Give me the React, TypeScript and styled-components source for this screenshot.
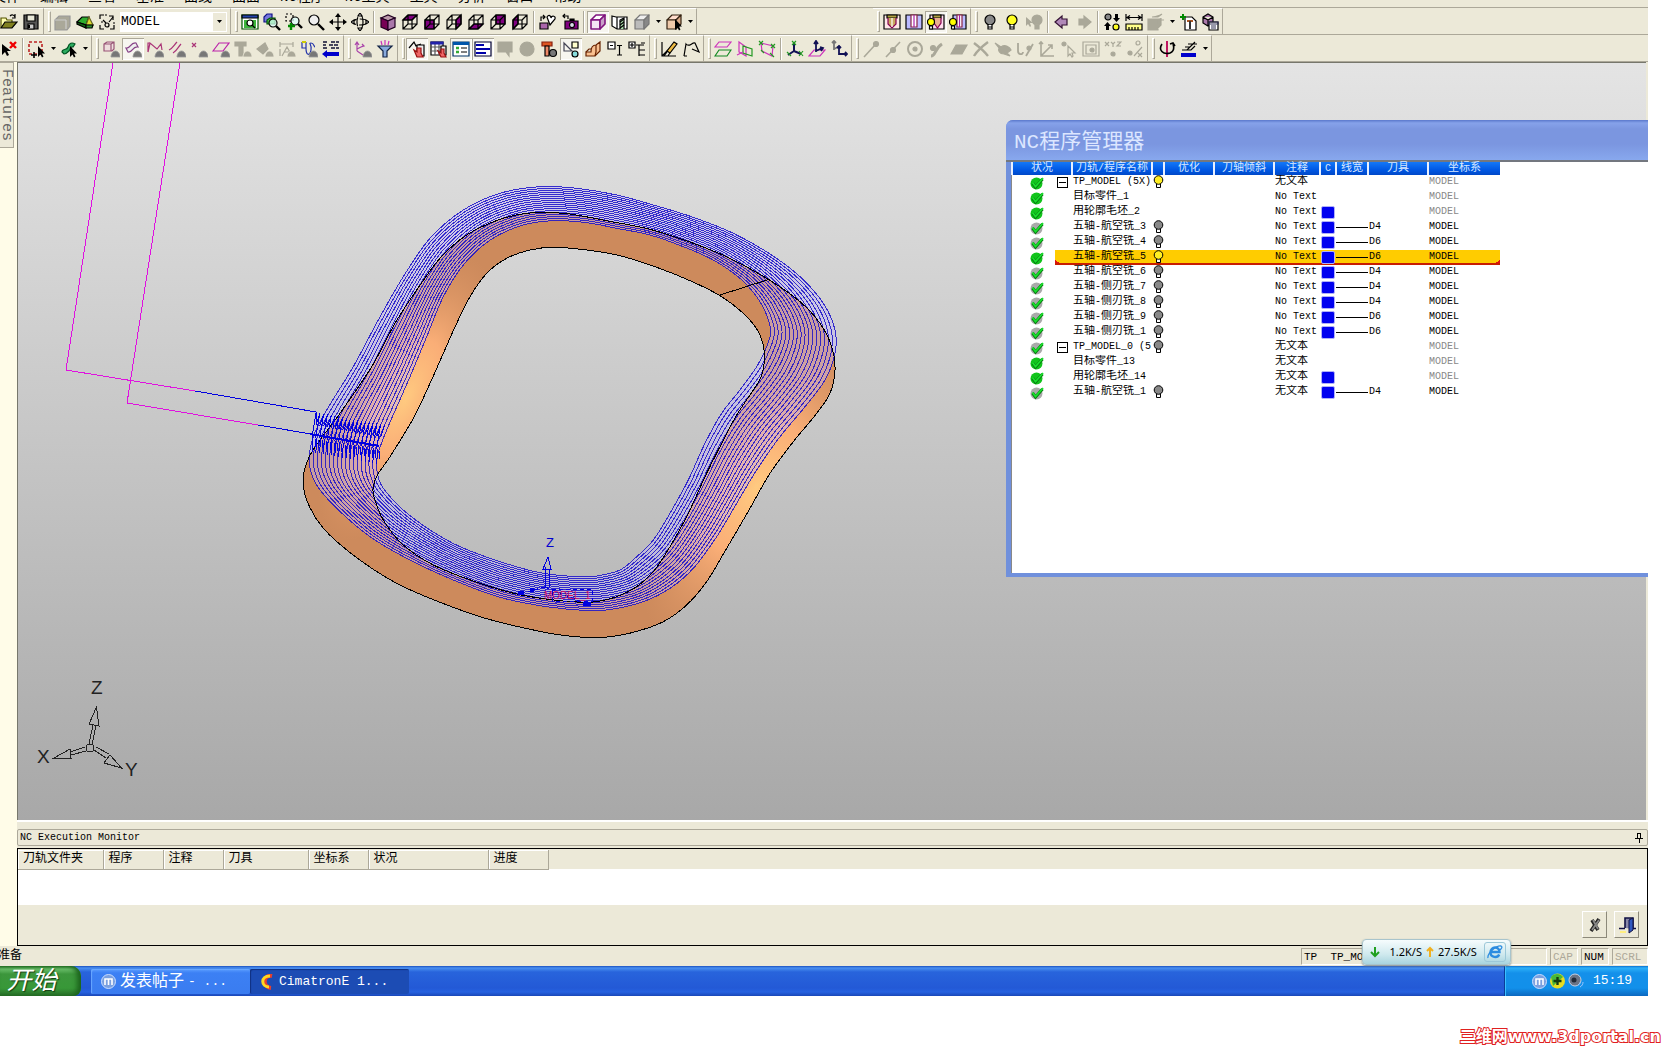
import React from "react";
import styled, { createGlobalStyle, css } from "styled-components";

const mono = '"Liberation Mono", "Noto Sans CJK SC", monospace';
const face = "#ece9d8";
const shade = "#aca899";

const GlobalStyle = createGlobalStyle`
  *, *::before, *::after { box-sizing: border-box; }
  body { margin: 0; background: #fff; color: #000; font: 12px/16px ${mono}; }
  button, select { font: inherit; color: inherit; margin: 0; padding: 0; border: 0; background: none; }
`;

/* ---------- shared ---------- */

const Page = styled.div`
  position: relative;
  height: 100vh;
  padding: 0 32px 54px 0;
  overflow: hidden;
`;
const Shell = styled.div`
  height: 100%;
  display: flex;
  flex-direction: column;
  background: ${face};
`;
const Cjk = styled.span`
  font-size: 11px;
`;
const Mixed = ({ text }: { text: string }) => (
  <>
    {text.split(/([\u4e00-\u9fff]+)/).map((run, i) => (i % 2 ? <Cjk key={i}>{run}</Cjk> : run))}
  </>
);

/* ---------- menu and toolbars ---------- */

const MenuBar = styled.nav`
  display: flex;
  align-items: flex-end;
  gap: 20px;
  height: 7px;
  flex: none;
  overflow: hidden;
  padding-bottom: 2px;
  margin-left: -8px;
  font-size: 14px;
  line-height: 16px;
`;
const MenuItem = styled.button`
  white-space: nowrap;
`;
const ToolRow = styled.div`
  display: flex;
  flex: none;
  height: 27px;
  border-top: 1px solid ${shade};
  overflow: hidden;
`;
const Group = styled.div<{ $first?: boolean; $gap?: number }>`
  display: flex;
  align-items: center;
  flex: none;
  height: 26px;
  padding-right: 1px;
  margin-left: ${(p) => (p.$first ? -2 : p.$gap || 0)}px;
  border-right: 1px solid ${shade};
  border-top: 1px solid #fff;
`;
const Grip = styled.span`
  width: 3px;
  height: 21px;
  margin: 0 1px 0 4px;
  border: 1px solid;
  border-color: #fff ${shade} ${shade} #fff;
`;
const Divider = styled.span`
  width: 2px;
  height: 22px;
  margin: 0 2px;
  background: ${shade};
  border-right: 1px solid #fff;
`;
const ToolButton = styled.button<{ $on?: boolean }>`
  width: 22px;
  height: 22px;
  display: grid;
  place-items: center;
  ${(p) =>
    p.$on &&
    css`
      background: #f7f6f0;
      box-shadow: inset 1px 1px ${shade}, inset -1px -1px #fff;
    `}
`;
const CaretButton = styled.button`
  width: 10px;
  height: 22px;
  display: grid;
  place-items: center;
`;
const Glyph = styled.svg`
  display: block;
  width: 18px;
  height: 18px;
  fill: none;
  stroke: #000;
  stroke-width: 1.2;
`;
const ModelPicker = styled.label`
  position: relative;
  display: flex;
  align-items: center;
  width: 107px;
  height: 20px;
  margin: 0 2px;
  background: #fff;
  font-size: 13px;
`;
const ModelSelect = styled.select`
  appearance: none;
  width: 100%;
  height: 20px;
  padding-left: 1px;
  outline: 0;
`;
const PickerArrow = styled.span`
  position: absolute;
  right: 1px;
  top: 1px;
  width: 13px;
  height: 18px;
  display: grid;
  place-items: center;
  background: ${face};
  pointer-events: none;
`;
const Caret = () => (
  <svg width="5" height="3" viewBox="0 0 5 3">
    <path d="M0 0h5L2.500 3z" />
  </svg>
);

const purple = "#800080";
const faces: Record<string, string> = {
  top: "2,7 7,2 16,2 11,7",
  front: "2,7 11,7 11,16 2,16",
  right: "11,7 16,2 16,11 11,16",
  bottom: "2,16 7,11 16,11 11,16",
  back: "7,2 16,2 16,11 7,11",
  left: "2,7 7,2 7,11 2,16",
};
const wire = (side: string) => (
  <>
    <polygon points={faces[side]} fill={purple} />
    <path d="M2 7h9v9H2zM7 2h9v9H7zM2 7l5-5M11 7l5-5M2 16l5-5M11 16l5-5" />
  </>
);
const solid = (top: string, front: string, right: string, line = "#000") => (
  <g stroke={line} strokeLinejoin="round">
    <polygon points={faces.top} fill={top} />
    <polygon points={faces.front} fill={front} />
    <polygon points={faces.right} fill={right} />
  </g>
);
const domeShape = "M9 17c0-3 2-6 4.500-6s4.500 3 4.500 6z";
const dome = <path d={domeShape} fill="#777" stroke="#999" strokeWidth=".8" />;
const grayDome = <path d={domeShape} fill="#aaa899" stroke="#ece9d8" strokeWidth=".8" />;
const bulb = (fill: string, line = "#000") => (
  <g stroke={line}>
    <circle cx="9" cy="7" r="5" fill={fill} />
    <path d="M7 12v4h4v-4M7 14h4" fill={fill === "#aaa899" ? fill : "#fff"} />
  </g>
);
const cursor = <path d="M10 6v11l2.500-2.500 1.500 3 1.500-1-1.500-3h3z" fill="#000" stroke="none" />;
const lens = (x: number, y: number, r = 4) => (
  <g>
    <circle cx={x} cy={y} r={r} fill="#dff" fillOpacity=".7" />
    <path d={`M${x + 3} ${y + 3}l4 4`} strokeWidth="2.4" />
  </g>
);
const G = "#aaa899";

const icons: Record<string, React.ReactNode> = {
  open: <><path d="M1 15V5h5l1 2h5v2" fill="#ffffb0" stroke="#550" /><path d="M1 15l4-6h12l-5 6z" fill="#808020" /><path d="M10 3c2-2 4-1 5 1M15 1v4h-3" /></>,
  save: <><path d="M2 2h14v14H2z" fill="#555" /><path d="M5 2h8v6H5z" fill="#e8e8d8" stroke="#000" /><path d="M6 11h6v5H6z" fill="#ccc" stroke="#000" /><path d="M7 12v3" strokeWidth="2" /></>,
  stamp: <><path d="M1 7l4-4h11v10l-3 4H1z" fill={G} stroke="#999" /><path d="M1 7h11M12 7v9" stroke="#ccc" /></>,
  green: <><path d="M1 9l5-5h7l-3 8z" fill="#2fae2f" /><path d="M13 4l4 8-7 0z" fill="#dede30" stroke="#662" /><path d="M1 9l9 3v3L1 11z" fill="#116611" /><path d="M10 12h7l-1 3h-6z" fill="#2c8c2c" /></>,
  grid: <><path d="M2 6V2h4M11 3h4v4M2 12v4h4M16 12v4h-4" /><circle cx="9" cy="12" r="2" /><path d="M5 7l3 3M11 9l4-5M3 9h2M15 10h2M7 2h2" /></>,
  winzoom: <><path d="M1 2h16v14H1z" fill="#fff" stroke="#050" /><path d="M1 2h16v3H1z" fill="#24a" /><path d="M3 7h12v8H3z" fill="#3cb53c" stroke="none" /><circle cx="9" cy="10" r="3" fill="#fff" /><path d="M11 12l3 3" /></>,
  layers: <><path d="M1 4l3-3h5v5l-3 3H1z" fill="#77d" stroke="#118" /><path d="M4 7l3-2h5v6H4z" fill="#4bc44b" stroke="#050" />{lens(10, 10)}</>,
  selzoom: <><path d="M1 1h7v7H1z" strokeDasharray="2 2" />{lens(10, 8)}<path d="M6 10v7M3 13h7" stroke="#080" strokeWidth="2.4" /></>,
  zoom: <><circle cx="7" cy="7" r="5" fill="#eee" /><path d="M11 11l6 6" strokeWidth="2.4" /></>,
  pan: <><path d="M9 2v14M2 9h14" /><path d="M9 0l3 4H6zM9 18l3-4H6zM0 9l4-3v6zM18 9l-4-3v6z" fill="#000" stroke="none" /></>,
  orbit: <><ellipse cx="9" cy="9" rx="7" ry="3" strokeDasharray="9 3" /><ellipse cx="9" cy="9" rx="3" ry="7" strokeDasharray="9 3" /><path d="M9 0l2 3H7zM9 18l2-3H7zM0 9l3-2v4zM18 9l-3-2v4z" fill="#fff" /></>,
  iso: <g stroke="#202"><path d="M2 5l7-3 7 3-7 3z" fill="#b9a" /><path d="M2 5l7 3v9l-7-3z" fill="#705" /><path d="M16 5L9 8v9l7-3z" fill="#a7a" /></g>,
  top: wire("top"), front: wire("front"), right: wire("right"), bottom: wire("bottom"), back: wire("back"), left: wire("left"),
  heart: <><path d="M8 4c2-3 4-1 4 1 1-3 5-2 4 1l-5 6z" fill="#fff" /><path d="M1 10h8v6H1z" fill="#a6a" /><path d="M2 8V4h4M4 2l2 2-2 2" /></>,
  camera: <><path d="M4 8h13v8H4z" fill={purple} /><circle cx="11" cy="12" r="2.500" fill="#dde" /><path d="M9 8V6h4v2" fill="#000" /><path d="M2 3h5v3M4 1L2 3l2 2" /></>,
  boxpink: <g strokeWidth="1.6">{solid("#fff", "#f4e4f4", "#c9a0c9", "#80157f")}</g>,
  hatch: <><path d="M1 3l4 1h11v12H6L1 13z" fill="#fff" /><path d="M6 4v12M9 16V7l4-2v11" fill="#ada" /><path d="M9 9l4-3M9 12l4-3M9 15l4-3" /></>,
  boxgray: solid("#eee", "#bbb", "#888", "#777"),
  boxcursor: <>{solid("#fdc", "#f0caaa", "#d8a987", "#321")}{cursor}</>,
  toolA: <><path d="M1 2h16v14H1z" fill="#ffe8e8" /><path d="M4 2h10v3H4z" fill="#b0a040" /><path d="M5 5v6l4 4 4-4V5" fill="#c8a860" stroke="#805" /><path d="M9 5v9" stroke="#fff" /></>,
  toolB: <><path d="M1 2h16v14H1z" fill="#bbf" /><path d="M6 2h6v12H6z" fill="#fff" stroke="#824" /><path d="M9 2v12" stroke="#a2a" /></>,
  toolC: <><path d="M3 2h14v14H3z" fill="#fde" /><path d="M6 2h8v3H6z" fill="#b0a040" /><path d="M7 5v5l3.500 5L14 10V5" fill="#e8b090" stroke="#805" /><circle cx="4" cy="9" r="3.500" fill="#ff0" /><path d="M2.500 13h3v3h-3z" fill="#fff" /></>,
  toolD: <><path d="M4 2h13v14H4z" fill="#bbf" /><path d="M8 2h5v12H8z" fill="#fff" stroke="#824" /><path d="M10.500 2v12" stroke="#a2a" /><circle cx="4" cy="9" r="3.500" fill="#ff0" /><path d="M2.500 13h3v3h-3z" fill="#fff" /></>,
  bulbGray: bulb("#888"), bulbOn: bulb("#ff2"),
  bulbOff: <><g transform="translate(3 0)">{bulb(G, G)}</g><path d="M1 4v9l2-2 2 3 1-1-1-3h3z" fill={G} stroke="none" /></>,
  arrowL: <path d="M2 9l7-6v3h5v6H9v3z" fill="#b088b8" stroke="#313" />,
  arrowR: <path d="M16 9L9 3v3H4v6h5v3z" fill={G} stroke={G} />,
  swap: <><circle cx="5" cy="4" r="3" fill="#888" /><circle cx="13" cy="14" r="3" fill="#ff2" /><path d="M12 1v4h-2l3.500 4L17 5h-2V1zM3 17v-4H1l3.500-4L8 13H6v4z" fill="#000" stroke="none" /></>,
  measure: <><path d="M1 1v7M17 1v7M2 4.500h14M5 2.500l-3 2 3 2M13 2.500l3 2-3 2" /><path d="M1 11h16v6H1z" fill="#ff8" /><path d="M4 14v3M7 14v3M10 14v3M13 14v3" /></>,
  blob: <><path d="M1 6h10v11H1zM5 4h6l4-3M11 6l6 1M11 6v9l3-3V5" fill={G} stroke={G} /></>,
  newtool: <><path d="M6 4h7l4 4v9H6z" fill="#fff" /><path d="M8 8h6" stroke="#a52" strokeWidth="2" /><path d="M11 8v8" stroke="#333" strokeWidth="2" /><path d="M4 1v6M1 4h6" stroke="#080" strokeWidth="2" /></>,
  boxlist: <><path d="M2 4l5-3 5 3v6l-5 3-5-3zM2 4l5 3 5-3M7 7v6" fill="#a7a" /><path d="M8 9h9v8H8z" fill="#fff" /><path d="M8 9h9v2H8zM10 13h5M10 15h5" stroke="#335" /></>,
  delcur: <><path d="M2 4v11l3-3 2 4 2-1-2-4h4z" fill="#000" stroke="none" /><path d="M10 2l6 6M16 2l-6 6" stroke="#e00" strokeWidth="2.400" /></>,
  dash: <><path d="M1 2h13v12H1z" stroke="#b22" strokeWidth="1.600" strokeDasharray="3 2" /><path d="M6 12v6M3 15h6" strokeWidth="1.600" />{cursor}</>,
  greencur: <><path d="M2 12c0-4 5-1 6-5s4-5 7-3l-2 3c-3-1-2 2-4 4s-4 3-5 3z" fill="#2cac60" stroke="#052" />{cursor}</>,
  f1: <><path d="M2 4l3-2h7v7l-2 2H2zM2 4h7v7M9 4l3-2" stroke="#957" fill="#edd" />{dome}</>,
  f2: <><path d="M2 8c5 1 4-6 10-5l2 4c-6-1-5 6-10 5z" stroke="#848" fill="#eee" />{dome}</>,
  f3: <><path d="M2 12L4 3l7 6 4-5 1 6M4 3H2v9" stroke="#a37" />{dome}</>,
  f4: <><path d="M1 10c4-2 5-5 8-8M5 13c4-2 5-6 8-9" stroke="#a37" />{dome}</>,
  f5: <><path d="M2 3l4 4M6 3L2 7" stroke="#a37" />{dome}</>,
  f6: <><path d="M1 11l6-8h10l-6 8z" stroke="#b2a" />{dome}</>,
  f7: <><path d="M1 2h11v4H9v10H5V6H1z" fill={G} stroke={G} />{grayDome}</>,
  f8: <><path d="M1 9l8-6 3 6-5 5z" fill={G} stroke={G} />{grayDome}</>,
  f9: <g stroke={G}><path d="M2 2v5M15 2v5M2 4h13M4 16L9 7l5 9M2 16V9M6 12h6" />{grayDome}</g>,
  f10: <><path d="M2 2v6h4V2M6 8c0 8 4 8 5 2s-3-7 0-7 3 4 4 4" stroke="#23a" /><path d="M2 2h4" stroke="#cc0" strokeWidth="2" />{dome}</>,
  f11: <><path d="M1 2h5M9 2h8M1 5h3M7 5h10M1 8h5M9 8h8" stroke="#113" strokeWidth="1.600" strokeDasharray="4 1" /><path d="M0 14l5-4v2h12v4H5v2z" fill="#00c" stroke="none" /></>,
  axes: <><path d="M3 11V2M1 5l2-3 2 3M3 9l6-3M8 4l2 2-3 1M3 11l6 4" stroke="#a4a" />{dome}</>,
  funnel: <><path d="M5 1l1 4M9 0v5M13 1l-1 4" stroke="#c3b" /><path d="M2 6h14l-5 5v6H7v-6z" fill="#8ad" stroke="#124" /></>,
  handA: <><path d="M1 8l5-6 2 4 5-2" /><path d="M9 5h7v11H9z" fill="#eee" /><path d="M6 10l3 2V8h4v5l2 4H9z" fill="#e66" stroke="#911" /></>,
  handB: <><path d="M1 2h12v13H1z" fill="#fff" /><path d="M1 7h12M1 11h12M5 2v13M9 2v13" stroke="#555" /><path d="M1 2h12v2H1z" fill="#22a" stroke="#22a" /><path d="M11 6h5v9h-5z" fill="#eee" /><path d="M8 11l3 2V9h3v4l2 4h-5z" fill="#e66" stroke="#911" /></>,
  listA: <><path d="M1 2h16v14H1z" fill="#fff" stroke="#036" /><path d="M1 2h16v3H1z" fill="#05a" stroke="none" /><path d="M4 8h3M4 12h3" stroke="#3a3" strokeWidth="2.400" /><path d="M9 8h6M9 12h6" /></>,
  listB: <><path d="M1 2h16v14H1z" fill="#fff" stroke="#003" /><path d="M2 5h8M2 9h14M2 13h10" stroke="#00a" strokeWidth="2" /></>,
  bubble: <path d="M2 2h14v10h-3v4l-3-4H2z" fill={G} stroke={G} />,
  disc: <circle cx="9" cy="9" r="7" fill={G} stroke={G} />,
  bolt: <><path d="M2 2h10v4H2z" fill="#d52" stroke="#821" /><path d="M5 6h4v10H5z" fill="#e86" /><circle cx="13" cy="13" r="3.500" fill="#777" /></>,
  shapes: <><path d="M2 3v8h8z" stroke="#445" /><path d="M10 2h6v6h-6z" fill="#ffc" /><circle cx="13" cy="14" r="3" fill="#8dd" /></>,
  step: <g stroke="#620"><path d="M2 12h5c0-4 1-7 5-7l4-3v9l-5 5H2z" fill="#f8c090" /><path d="M2 12l3-3h2M12 5v7l-1 4" /></g>,
  nodeA: <><path d="M2 2h7v7H2z" fill="#fff" /><path d="M4 5.500h3M11 5.500h5M13.500 5v10M11 15h5" /></>,
  nodeB: <><path d="M1 2h6v6H1z" fill="#fff" /><path d="M2 5h4M4 3v4M8 5h8M11 5v11M11 10h6M11 15h6M13 3h4" /></>,
  pencil: <><path d="M2 2v14h14M2 16L14 4M4 16l3-4M8 16l3-5" /><path d="M7 11L14 2l3 2-7 9z" fill="#eb4" /></>,
  poly: <path d="M2 16L4 4c3 4 6-2 9-1l4 9-7-3M2 16h3" />,
  pA: <><path d="M5 2h12l-4 5H1z" stroke="#c3b" /><path d="M5 10h12l-4 6H1z" stroke="#182" /></>,
  pB: <><path d="M3 2l7 5v9l-7-4z" stroke="#c3b" /><path d="M7 6l9 3v7l-9-3z" stroke="#292" /><path d="M1 15l6-3" stroke="#c3b" /></>,
  pC: <><path d="M3 3l12 3-1 10L4 11z" stroke="#c3b" /><path d="M1 1l4 4M5 1L1 5M13 4l4 4M17 4l-4 4M12 13l4 4M3 10l3 3" stroke="#292" /></>,
  cA: <><path d="M8 2v9l7 3M8 11l-6 4" stroke="#115" strokeWidth="2" /><path d="M6 1l4 4M10 1L6 5M1 12l4 4M13 11l4 5M17 11l-4 5" stroke="#292" /></>,
  cB: <><path d="M1 16l5-6h11l-5 6z" stroke="#c3b" /><path d="M8 12V2M8 11l6-3M6 4l2-3 2 3M12 7l3 1-2 3" stroke="#115" strokeWidth="1.800" /></>,
  cC: <><path d="M4 10V1M4 9l6-3M2 3l2-2 2 2" stroke="#777" strokeWidth="1.800" /><path d="M9 15V6M9 14h8M7 8l2-2 2 2M15 12l2 2-2 2" stroke="#115" strokeWidth="1.800" /></>,
  g1: <g stroke={G} fill={G}><path d="M2 17L13 5" strokeWidth="1.600" /><circle cx="14" cy="4" r="2.500" /></g>,
  g2: <g stroke={G} fill={G}><path d="M2 17L16 2" strokeWidth="1.600" /><circle cx="9" cy="10" r="2.500" /></g>,
  g3: <g stroke={G}><circle cx="9" cy="9" r="7" strokeWidth="2" /><circle cx="9" cy="9" r="2" fill={G} /></g>,
  g4: <g stroke={G} fill={G}><path d="M3 16c5 0 3-7 11-12" strokeWidth="3" fill="none" /><circle cx="5" cy="8" r="2.500" /></g>,
  g5: <path d="M1 14L6 5h11l-5 9z" fill={G} stroke={G} />,
  g6: <path d="M2 3c4 3 10 8 14 13M16 2C12 5 5 11 2 16" stroke={G} strokeWidth="2.400" />,
  g7: <path d="M1 3l6 4c4-3 9 0 10 3l-4 3 3 3-6-2c-5 0-6-4-5-6z" fill={G} stroke={G} />,
  g8: <g stroke={G}><path d="M2 3v8c0 4 5 4 5 1M10 16l7-12" strokeWidth="1.800" /><circle cx="13" cy="8" r="2" fill={G} /></g>,
  g9: <path d="M3 2v14h13M3 16L14 5M10 5h4v4M1 4l2-2 2 2" stroke={G} strokeWidth="1.600" />,
  g10: <g stroke={G}><circle cx="4" cy="4" r="2" fill={G} /><path d="M8 6v10l2-2 2 3 1-1-1-3h3z" /></g>,
  g11: <g stroke={G}><path d="M1 2h16v14H1zM4 5h10v9H4z" /><circle cx="10" cy="10" r="2" fill={G} /></g>,
  g12: <g stroke={G}><path d="M1 2l4 4M5 2L1 6M7 2l2 2 2-2M9 4v3M13 2h4l-4 4h4" /><circle cx="9" cy="14" r="2" fill={G} /></g>,
  g13: <g stroke={G}><circle cx="12" cy="3" r="2" /><circle cx="4" cy="13" r="2" fill={G} /><path d="M8 16l8-9M12 13l4 4M16 13l-4 4" /></g>,
  turn: <><path d="M9 1v16" stroke="#b05" strokeWidth="1.800" /><path d="M4 4c-4 6 1 11 8 9 5-2 4-6 3-9M12 4l3-1 2 3" strokeWidth="1.600" /></>,
  steps: <><path d="M2 10h5l8-8M5 7h5M8 4h9M7 10h4l4-4" /><path d="M1 13h15v4H1z" fill="#00c" stroke="none" /></>,
};

const Tool = ({ name }: { name: string }) => {
  if (name === "|") return <Divider />;
  if (name === "v") return <CaretButton type="button" aria-label="more"><Caret /></CaretButton>;
  const on = name[0] === "*";
  const id = on ? name.slice(1) : name;
  return (
    <ToolButton type="button" $on={on} aria-label={id}>
      <Glyph viewBox="0 0 18 18">{icons[id]}</Glyph>
    </ToolButton>
  );
};
const Tools = ({ list }: { list: string }) => <>{list.split(" ").map((n, i) => <Tool key={i} name={n} />)}</>;

/* ---------- work area ---------- */

const Work = styled.main`
  position: relative;
  flex: 1;
  min-height: 0;
  display: flex;
  padding-right: 2px;
  border-top: 1px solid ${shade};
`;
const Side = styled.aside`
  width: 17px;
  flex: none;
  background: #fffce8;
`;
const FeatureTab = styled.button`
  display: block;
  width: 14px;
  height: 86px;
  border: 1px solid ${shade};
  border-left: 0;
  background: ${face};
  writing-mode: vertical-rl;
  font-size: 15px;
  line-height: 13px;
  color: #666;
`;
const Viewport = styled.svg`
  flex: 1;
  min-width: 0;
  height: 100%;
  border-left: 1px solid #77776c;
  border-top: 1px solid #77776c;
  background: linear-gradient(#e4e4e4, #c6c6c6 50%, #a8a8a8);
`;

type Pt = [number, number];
const parse = (s: string): Pt[] => s.split(" ").map((p) => p.split(",").map(Number) as Pt);
/* closed Catmull-Rom curve; points are stored at three units per pixel */
const smooth = (raw: Pt[]) => {
  const p = raw.map(([x, y]) => [282 + x / 3, 117 + y / 3]);
  const n = p.length;
  const f = (v: number) => v.toFixed(1);
  let d = `M${f(p[0][0])} ${f(p[0][1])}`;
  for (let i = 0; i < n; i++) {
    const a = p[(i + n - 1) % n], b = p[i], c = p[(i + 1) % n], e = p[(i + 2) % n];
    d += `C${f(b[0] + (c[0] - a[0]) / 6)} ${f(b[1] + (c[1] - a[1]) / 6)} ${f(c[0] - (e[0] - b[0]) / 6)} ${f(c[1] - (e[1] - b[1]) / 6)} ${f(c[0])} ${f(c[1])}`;
  }
  return d + "Z";
};
const outerEdge = smooth(parse("740,98 810,102 935,125 1050,148 1180,190 1290,235 1405,298 1500,365 1560,430 1595,500 1605,570 1590,640 1550,700 1480,785 1410,880 1350,985 1280,1105 1220,1205 1160,1275 1090,1325 1000,1357 920,1371 850,1372 740,1358 560,1316 420,1267 290,1210 170,1133 70,1045 20,960 10,890 28,830 60,780 120,700 215,560 285,430 350,330 420,235 500,165 600,118 680,100"));
const innerEdge = smooth(parse("760,202 860,210 960,227 1070,262 1170,302 1260,347 1330,400 1375,455 1393,515 1388,575 1370,615 1310,705 1260,800 1215,890 1165,1000 1110,1100 1060,1175 1010,1220 950,1250 880,1266 780,1262 650,1242 520,1203 400,1155 310,1095 250,1020 222,950 220,920 232,885 270,830 340,715 390,610 430,520 470,430 510,350 560,280 620,235 690,210"));
const cutOuter = parse("720,20 830,25 950,45 1060,75 1180,112 1300,160 1410,222 1500,290 1570,370 1605,450 1605,520 1575,600 1515,680 1440,770 1370,870 1310,970 1250,1070 1180,1165 1110,1225 1030,1265 940,1287 870,1292 740,1280 600,1252 460,1200 330,1140 210,1070 110,985 50,915 28,850 40,770 80,690 160,560 235,420 310,290 390,175 490,90 600,40");
const cutInner = parse("760,122 860,128 950,145 1050,165 1150,200 1240,240 1320,295 1370,350 1400,405 1412,455 1400,500 1370,560 1320,630 1265,700 1215,790 1165,900 1110,1000 1060,1080 1010,1130 960,1170 890,1188 830,1190 720,1178 600,1145 480,1100 390,1050 310,990 250,925 232,880 232,830 248,780 275,715 330,590 380,470 430,350 490,255 570,180 670,135");
const PASSES = 18;
const passes = Array.from({ length: PASSES }, (_, k) => {
  const t = k / (PASSES - 1);
  return smooth(cutOuter.map(([x, y], i) => [x + (cutInner[i][0] - x) * t, y + (cutInner[i][1] - y) * t] as Pt));
});
const leads = Array.from({ length: PASSES }, (_, k) => {
  const x = k * 3.8, y = k * 0.7;
  return `M${298 + x} ${350 + y}l-4 24M${302 + x} ${350 + y}l-4 12M${295 + x} ${374 + y}l-1 15M${297 + x} ${376 + y}v8`;
}).join("");

const Model = () => (
  <Viewport aria-label="model view" role="img">
    <defs>
      <clipPath id="ring"><path d={outerEdge + innerEdge} clipRule="evenodd" /></clipPath>
      <radialGradient id="glow">
        <stop offset="0" stopColor="#ffca80" />
        <stop offset=".4" stopColor="#ffb27a" stopOpacity=".9" />
        <stop offset="1" stopColor="#e09a68" stopOpacity="0" />
      </radialGradient>
    </defs>
    <g clipPath="url(#ring)">
      <rect x="260" y="100" width="580" height="500" fill="#cd8a5c" />
      <ellipse cx="388" cy="335" rx="155" ry="62" fill="url(#glow)" transform="rotate(-64 388 335)" />
      <ellipse cx="738" cy="425" rx="175" ry="76" fill="url(#glow)" transform="rotate(-58 738 425)" />
    </g>
    <path d={passes[0] + passes[PASSES - 1]} fillRule="evenodd" fill="#c4b8ff" fillOpacity=".42" />
    <g fill="none" shapeRendering="crispEdges">
      <g stroke="#1a10c8" strokeOpacity=".85">{passes.map((d, i) => <path key={i} d={d} />)}</g>
      <path d={outerEdge} stroke="#000" />
      <path d={innerEdge} stroke="#000" />
      <path d="M702 232L752 216" stroke="#000" />
      <g stroke="#e010e0">
        <path d="M95 0L48 307L177 328" />
        <path d="M162 0L109 340L240 362" />
      </g>
      <g stroke="#0000e0">
        <path d="M177 328L298 349V362" />
        <path d="M240 362L293 371" />
        <path d={leads} />
        <path d="M292 371L361 383" strokeWidth="2" />
        <path d="M527 524V504M531 524V506M525 506L530 494L533 506Z" />
        <path d="M527 524L501 531M527 524L569 541M534 526h40v12h-40z" strokeDasharray="4 3" />
        <path d="M500 530h6M565 541h8M512 527h4" strokeWidth="4" />
      </g>
      <g stroke="#222">
        <path d="M71 681L75 662M74 682L78 662M67 684L52 689M68 688L53 692M76 687L88 695M78 684L91 691" />
        <path d="M78.500 644L71 661L81 663ZM36 695L52 686L53 695ZM103.500 705L92 692L86 700Z" />
        <circle cx="72" cy="685" r="4" />
      </g>
    </g>
    <g fontFamily="Liberation Sans, sans-serif">
      <text x="528" y="484" fontSize="13" fill="#0000d0">Z</text>
      <text x="526" y="536" fontSize="10" fill="#d01060">MODEL_1</text>
      <g fontSize="19" fill="#222">
        <text x="73" y="631">Z</text>
        <text x="19" y="700">X</text>
        <text x="107" y="713">Y</text>
      </g>
    </g>
  </Viewport>
);

/* ---------- NC program manager ---------- */

const Dialog = styled.section`
  position: absolute;
  top: 58px;
  right: 0;
  width: 642px;
  height: 457px;
  display: flex;
  flex-direction: column;
  border: solid #7090dc;
  border-width: 0 0 4px 5px;
  border-radius: 7px 0 0 0;
  background: #fff;
  box-shadow: inset 1px 0 #888;
`;
const DialogTitle = styled.h2`
  margin: 0 0 0 -5px;
  height: 42px;
  flex: none;
  padding: 3px 0 0 8px;
  border-bottom: 2px solid #73777f;
  border-radius: 7px 0 0 0;
  background: linear-gradient(#5a78cc, #86a2ea 3px, #7b96e0 9px, #7b96e0 24px, #88a8ee);
  color: #dce6ff;
  font-size: 21px;
  font-weight: 400;
  line-height: 40px;
`;
const Programs = styled.table`
  width: 488px;
  table-layout: fixed;
  border-collapse: collapse;
  font-size: 10px;
  line-height: 13px;
  white-space: nowrap;
`;
const Head = styled.th`
  height: 13px;
  padding: 0;
  border-left: 2px solid #e8f0ff;
  background: linear-gradient(#1478f8, #0058e4 60%, #0048c8);
  color: #d8e8ff;
  font-weight: 400;
  text-align: center;
`;
const Row = styled.tr<{ $sel?: boolean }>`
  height: 15px;
  ${(p) =>
    p.$sel &&
    css`
      td:not(:first-child) {
        background: #ffcc00;
        box-shadow: inset 0 -2px #c81e00;
      }
      td:nth-child(2) {
        background: linear-gradient(to top right, #e01010 50%, #ffcc00 50%) left bottom / 8px 5px no-repeat #ffcc00;
      }
      td:last-child {
        background: linear-gradient(to top left, #e01010 50%, #ffcc00 50%) right bottom / 8px 5px no-repeat #ffcc00;
      }
    `}
`;
const Cell = styled.td<{ $dim?: boolean; $center?: boolean; $pad?: number }>`
  height: 15px;
  padding: 0 0 0 ${(p) => p.$pad || 0}px;
  vertical-align: ${(p) => (p.$center ? "middle" : "top")};
  color: ${(p) => (p.$dim ? "#888" : "#000")};
  overflow: hidden;
  svg { display: block; margin: 0 auto; }
`;
const Swatch = styled.span`
  display: block;
  width: 14px;
  height: 13px;
  margin: 0 auto;
  border: 1px solid #b0b0f8;
  border-radius: 2px;
  background: #0000f0;
`;
const LineSample = styled.span`
  display: block;
  height: 1px;
  background: #000;
`;
const Fold = styled.button`
  display: block;
  width: 11px;
  height: 11px;
  margin-left: 2px;
  border: 1px solid #000;
  background: linear-gradient(#000, #000) center / 7px 1px no-repeat #fff;
`;
const Check = ({ solid: s }: { solid: boolean }) => (
  <svg width="14" height="14" viewBox="0 0 14 14">
    <circle cx="6.500" cy="7.500" r="6" fill={s ? "#12c41c" : "#aaa"} />
    <path d="M2.500 7l3 4 7-8" fill="none" stroke="#0a7a10" strokeWidth="3" />
    <path d="M2.500 6.500l3 4 7.500-8.500" fill="none" stroke="#18e02c" strokeWidth="1.800" />
  </svg>
);
const Lamp = ({ on }: { on: boolean }) => (
  <svg width="11" height="14" viewBox="0 0 11 14" stroke="#000">
    <path d="M3.500 8v4.500h4V8" fill="#fff" />
    <circle cx="5.500" cy="5" r="4.300" fill={on ? "#ffee22" : "#888"} />
  </svg>
);

type Prog = { name: string; ok?: boolean; fold?: boolean; lamp?: "on" | "off"; note: string; color?: boolean; tool?: string; sel?: boolean };
const none = "无文本";
const programs: Prog[] = [
  { name: "TP_MODEL (5X)", ok: true, fold: true, lamp: "on", note: none },
  { name: "目标零件_1", ok: true, note: "No Text" },
  { name: "用轮廓毛坯_2", ok: true, note: "No Text", color: true },
  { name: "五轴-航空铣_3", lamp: "off", note: "No Text", color: true, tool: "D4" },
  { name: "五轴-航空铣_4", lamp: "off", note: "No Text", color: true, tool: "D6" },
  { name: "五轴-航空铣_5", ok: true, lamp: "on", note: "No Text", color: true, tool: "D6", sel: true },
  { name: "五轴-航空铣_6", lamp: "off", note: "No Text", color: true, tool: "D4" },
  { name: "五轴-侧刃铣_7", lamp: "off", note: "No Text", color: true, tool: "D4" },
  { name: "五轴-侧刃铣_8", lamp: "off", note: "No Text", color: true, tool: "D4" },
  { name: "五轴-侧刃铣_9", lamp: "off", note: "No Text", color: true, tool: "D6" },
  { name: "五轴-侧刃铣_1", lamp: "off", note: "No Text", color: true, tool: "D6" },
  { name: "TP_MODEL_0 (5", fold: true, lamp: "off", note: none },
  { name: "目标零件_13", ok: true, note: none },
  { name: "用轮廓毛坯_14", ok: true, note: none, color: true },
  { name: "五轴-航空铣_1", lamp: "off", note: none, color: true, tool: "D4" },
];
const columns = [43, 17, 80, 12, 50, 60, 46, 16, 32, 60, 72];
const heads = ["刀轨/程序名称", "", "优化", "刀轴倾斜", "注释", "C", "线宽", "刀具", "坐标系"];

const Manager = () => (
  <Dialog>
    <DialogTitle>NC程序管理器</DialogTitle>
    <Programs>
      <colgroup>{columns.map((w, i) => <col key={i} width={w} />)}</colgroup>
      <thead>
        <tr>
          <Head colSpan={2}><Mixed text="状况" /></Head>
          {heads.map((h, i) => <Head key={i}><Mixed text={h} /></Head>)}
        </tr>
      </thead>
      <tbody>
        {programs.map((p, i) => (
          <Row key={i} $sel={p.sel}>
            <Cell $center $pad={7}><Check solid={!!p.ok} /></Cell>
            <Cell $center>{p.fold && <Fold type="button" aria-label="collapse" />}</Cell>
            <Cell $pad={1}><Mixed text={p.name} /></Cell>
            <Cell>{p.lamp && <Lamp on={p.lamp === "on"} />}</Cell>
            <Cell />
            <Cell />
            <Cell $pad={1}><Mixed text={p.note} /></Cell>
            <Cell $center>{p.color && <Swatch />}</Cell>
            <Cell $center>{p.tool && <LineSample />}</Cell>
            <Cell $pad={1}>{p.tool}</Cell>
            <Cell $pad={1} $dim={!p.tool}>MODEL</Cell>
          </Row>
        ))}
      </tbody>
    </Programs>
  </Dialog>
);

/* ---------- execution monitor ---------- */

const Lower = styled.div`
  flex: none;
  display: flex;
`;
const Monitor = styled.section`
  flex: 1;
  min-width: 0;
  padding-top: 7px;
  border-top: 2px solid #fff;
  background: ${face};
`;
const MonitorTitle = styled.header`
  display: flex;
  justify-content: space-between;
  align-items: center;
  height: 17px;
  padding: 0 4px 0 2px;
  border: 1px solid ${shade};
  border-radius: 2px;
  font-size: 10px;
`;
const PinButton = styled.button`
  display: grid;
  place-items: center;
`;
const MonitorBox = styled.div`
  margin-top: 2px;
  border: 1px solid #000;
`;
const JobArea = styled.div`
  height: 55px;
  margin-top: 1px;
  background: linear-gradient(${face} 19px, #fff 19px);
`;
const Jobs = styled.table`
  table-layout: fixed;
  width: 530px;
  border-collapse: collapse;
`;
const JobHead = styled.th`
  height: 19px;
  padding: 0 0 0 5px;
  border-right: 1px solid ${shade};
  border-bottom: 1px solid ${shade};
  background: ${face};
  box-shadow: inset 1px 1px #fff;
  text-align: left;
  font-weight: 400;
  line-height: 16px;
  white-space: nowrap;
`;
const Actions = styled.div`
  display: flex;
  justify-content: flex-end;
  gap: 7px;
  padding: 6px 8px 7px 0;
`;
const ActionButton = styled.button`
  width: 25px;
  height: 27px;
  display: grid;
  place-items: center;
  border: 1px solid;
  border-color: #fff #8c897a #8c897a #fff;
`;

/* ---------- status bar ---------- */

const StatusBar = styled.footer`
  position: relative;
  flex: none;
  display: flex;
  align-items: center;
  gap: 3px;
  height: 20px;
  font-size: 11px;
`;
const Ready = styled.span`
  flex: 1;
  margin-left: -2px;
  font-size: 12px;
`;
const StatusCell = styled.span<{ $w: number; $dim?: boolean }>`
  width: ${(p) => p.$w}px;
  height: 17px;
  padding-left: 2px;
  border: 1px solid;
  border-color: ${shade} #fff #fff ${shade};
  color: ${(p) => (p.$dim ? shade : "#000")};
  white-space: pre;
  line-height: 16px;
`;
const SpeedMeter = styled.div`
  position: absolute;
  right: 137px;
  top: -7px;
  width: 149px;
  height: 26px;
  display: flex;
  align-items: center;
  gap: 4px;
  padding: 0 4px 0 7px;
  border: 1px solid #a8c4cc;
  border-radius: 4px;
  background: linear-gradient(#f6fcfd, #cfe9ee 60%, #a8d4de);
  box-shadow: 0 1px 2px #7a8a8e;
  font: 11px/16px "Noto Sans", sans-serif;
`;
const Rate = styled.span<{ $w: number }>`
  width: ${(p) => p.$w}px;
  text-align: right;
`;
const BrowserButton = styled.button`
  width: 22px;
  height: 20px;
  margin-left: auto;
  display: grid;
  place-items: center;
  border: 1px solid #9cc8d8;
  border-radius: 3px;
`;

/* ---------- taskbar ---------- */

const Taskbar = styled.div`
  flex: none;
  display: flex;
  height: 30px;
  background: linear-gradient(#1a50c0, #4a90f0 2px, #2864dc 6px, #2359d6 22px, #2662e0 26px, #1a48b8);
  color: #fff;
`;
const Start = styled.button`
  width: 81px;
  margin-right: 10px;
  padding: 4px 18px 0 0;
  border-radius: 0 10px 8px 0;
  background: linear-gradient(#2a7a2a, #6cc06c 3px, #3c963c 8px, #389838 22px, #2a702a);
  box-shadow: inset -4px 0 5px #1c641c;
  font-size: 25px;
  line-height: 26px;
  font-style: italic;
  text-shadow: 1px 1px 1px #143c14;
`;
const Task = styled.button<{ $active?: boolean }>`
  display: flex;
  align-items: center;
  gap: 4px;
  width: 159px;
  height: 25px;
  margin-top: 3px;
  padding-left: 10px;
  border-radius: 2px;
  background: ${(p) => (p.$active ? "#1c4cb4" : "linear-gradient(#5a9cff, #3c80f4 4px, #3a7cf0)")};
  box-shadow: inset 1px 1px 1px ${(p) => (p.$active ? "#103080" : "#6aa8ff")};
  font-size: 13px;
  white-space: pre;
`;
const TaskCjk = styled.span`
  font-size: 16px;
`;
const Tray = styled.div`
  display: flex;
  align-items: center;
  gap: 2px;
  width: 144px;
  margin-left: auto;
  padding-left: 27px;
  border-left: 1px solid #0a3c98;
  background: linear-gradient(#0c70d0, #2cb0f8 2px, #1490ea 7px, #1290ea 22px, #0c68c0);
  box-shadow: inset 1px 0 #3cc0ff;
`;
const Clock = styled.time`
  margin-left: 6px;
  font-size: 13px;
`;
const Watermark = styled.div`
  position: absolute;
  right: 19px;
  bottom: 3px;
  color: #fff;
  font: bold 16px/20px "DejaVu Sans", "Noto Sans CJK SC", sans-serif;
  -webkit-text-stroke: 2px #e02020;
  paint-order: stroke fill;
`;

const Maxthon = () => (
  <svg width="15" height="15" viewBox="0 0 15 15">
    <circle cx="7.500" cy="7.500" r="7" fill="#7aa0e0" stroke="#c8dcff" />
    <path d="M4 11V5h7v6M7.500 5v6" fill="none" stroke="#fff" strokeWidth="1.600" />
  </svg>
);
const Pin = () => (
  <svg width="8" height="10" viewBox="0 0 8 10" fill="none" stroke="#000" shapeRendering="crispEdges">
    <path d="M2.500.5h3v5h-3zM5.500 1v5M0 5.500h8M4 6v4" />
  </svg>
);

export default function App() {
  return (
    <Page>
      <GlobalStyle />
      <Shell>
        <MenuBar>
          {["文件", "编辑", "查看", "基准", "曲线", "曲面", "NC程序", "NC工具", "工具", "分析", "窗口", "帮助"].map((m) => (
            <MenuItem key={m} type="button">{m}</MenuItem>
          ))}
        </MenuBar>
        <ToolRow>
          <Group $first><Tools list="open save" /></Group>
          <Group>
            <Grip />
            <Tools list="stamp green grid" />
            <ModelPicker>
              <ModelSelect aria-label="model" defaultValue="MODEL"><option>MODEL</option></ModelSelect>
              <PickerArrow><Caret /></PickerArrow>
            </ModelPicker>
          </Group>
          <Group>
            <Grip />
            <Tools list="winzoom layers selzoom zoom pan orbit | iso top front right bottom back left | heart camera | *boxpink hatch boxgray v boxcursor v" />
          </Group>
          <Group $gap={176}><Grip /><Tools list="toolA toolB *toolC toolD" /></Group>
          <Group><Grip /><Tools list="bulbGray bulbOn bulbOff | arrowL arrowR | swap measure blob v newtool boxlist" /></Group>
        </ToolRow>
        <ToolRow>
          <Group $first><Tools list="delcur | dash v greencur v" /></Group>
          <Group><Grip /><Tools list="f1 *f2 f3 f4 f5 f6 f7 f8 f9 f10 f11" /></Group>
          <Group><Grip /><Tools list="axes funnel" /></Group>
          <Group><Grip /><Tools list="*handA handB *listA *listB bubble disc bolt *shapes step nodeA nodeB" /></Group>
          <Group><Grip /><Tools list="pencil poly" /></Group>
          <Group><Grip /><Tools list="pA pB pC | cA cB cC" /></Group>
          <Group><Grip /><Tools list="g1 g2 g3 g4 g5 g6 g7 g8 g9 g10 g11 g12 g13" /></Group>
          <Group><Grip /><Tools list="turn steps v" /></Group>
        </ToolRow>

        <Work>
          <Side><FeatureTab type="button">Features</FeatureTab></Side>
          <Model />
          <Manager />
        </Work>

        <Lower>
          <Side />
          <Monitor>
            <MonitorTitle>
              NC Execution Monitor
              <PinButton type="button" aria-label="pin"><Pin /></PinButton>
            </MonitorTitle>
            <MonitorBox>
              <JobArea>
                <Jobs>
                  <colgroup>{[85, 60, 60, 85, 60, 120, 60].map((w, i) => <col key={i} width={w} />)}</colgroup>
                  <thead>
                    <tr>{["刀轨文件夹", "程序", "注释", "刀具", "坐标系", "状况", "进度"].map((h) => <JobHead key={h}>{h}</JobHead>)}</tr>
                  </thead>
                </Jobs>
              </JobArea>
              <Actions>
                <ActionButton type="button" aria-label="cancel">
                  <svg width="16" height="18" viewBox="0 0 16 18" fill="none">
                    <path d="M5 4l6 10M12 3L4 15" stroke="#222" strokeWidth="3.600" />
                    <path d="M6 4l5 9M12 4L5 14" stroke="#888" strokeWidth="1.800" />
                  </svg>
                </ActionButton>
                <ActionButton type="button" aria-label="exit">
                  <svg width="18" height="18" viewBox="0 0 18 18" fill="none" stroke="#114">
                    <path d="M7 12V2h8v11" fill="#88a" strokeWidth="1.600" />
                    <path d="M11 4l4-2v12l-4 3z" fill="#3058c0" />
                    <path d="M1 12.500h6M15 12.500h3" strokeWidth="1.600" />
                    <path d="M2 16h6" stroke="#ffee80" strokeWidth="2" />
                  </svg>
                </ActionButton>
              </Actions>
            </MonitorBox>
          </Monitor>
        </Lower>

        <StatusBar>
          <Ready>准备</Ready>
          <StatusCell $w={246}>TP  TP_MODEL</StatusCell>
          <StatusCell $w={28} $dim>CAP</StatusCell>
          <StatusCell $w={28}>NUM</StatusCell>
          <StatusCell $w={36} $dim>SCRL</StatusCell>
          <SpeedMeter>
            <svg width="10" height="12" viewBox="0 0 10 12" fill="none" stroke="#20a020" strokeWidth="2"><path d="M5 1v9M1 6l4 4 4-4" /></svg>
            <Rate $w={38}>1.2K/S</Rate>
            <svg width="8" height="12" viewBox="0 0 8 12" fill="none" stroke="#f0b020" strokeWidth="2"><path d="M4 11V2M1 5l3-3 3 3" /></svg>
            <Rate $w={38}>27.5K/S</Rate>
            <BrowserButton type="button" aria-label="browser">
              <svg width="16" height="16" viewBox="0 0 16 16" fill="none" stroke="#2c8ce0">
                <path d="M4 8h8.500c0-6-9-6-9 .5 0 5 7 6 8.700 2" strokeWidth="2.400" />
                <path d="M1 14C0 9 10 1 14 2c2 1 0 3-1 4" strokeWidth="1.300" />
              </svg>
            </BrowserButton>
          </SpeedMeter>
        </StatusBar>

        <Taskbar>
          <Start type="button">开始</Start>
          <Task type="button"><Maxthon /><TaskCjk>发表帖子</TaskCjk>- ...</Task>
          <Task type="button" $active>
            <svg width="15" height="16" viewBox="0 0 15 16" fill="none">
              <path d="M12 2C3 0 2 13 11 14" stroke="#e8402c" strokeWidth="4" />
              <path d="M10 2C0 2 1 13 9 13" stroke="#ffd820" strokeWidth="3" />
            </svg>
            CimatronE 1...
          </Task>
          <Tray>
            <Maxthon />
            <svg width="17" height="16" viewBox="0 0 17 16">
              <circle cx="8.500" cy="8" r="7.500" fill="#e8dc20" />
              <path d="M2 4a7.500 7.500 0 0 1 12 0L4 13z" fill="#48b838" />
              <path d="M8.500 4v8M4.500 8h8" stroke="#143c10" strokeWidth="2.400" />
            </svg>
            <svg width="17" height="16" viewBox="0 0 17 16">
              <circle cx="7" cy="7" r="6" fill="#6a7486" stroke="#c8d0e0" />
              <circle cx="6" cy="7" r="2.500" fill="#222a38" />
              <path d="M12 14c2-1 3-3 3-5M10 12c2-1 2-2 2-3" fill="none" stroke="#9cc8ff" />
            </svg>
            <Clock>15:19</Clock>
          </Tray>
        </Taskbar>
      </Shell>
      <Watermark>三维网www.3dportal.cn</Watermark>
    </Page>
  );
}
